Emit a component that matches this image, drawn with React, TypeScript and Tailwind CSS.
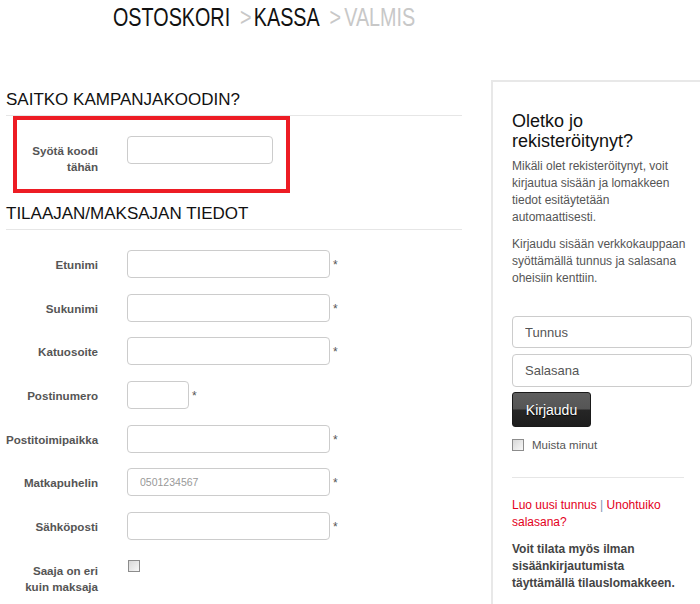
const fields = [
  { label: "Etunimi", w: "w-[203px]" },
  { label: "Sukunimi", w: "w-[203px]" },
  { label: "Katuosoite", w: "w-[203px]" },
  { label: "Postinumero", w: "w-[62px]" },
  { label: "Postitoimipaikka", w: "w-[203px]" },
  { label: "Matkapuhelin", w: "w-[203px]", placeholder: "0501234567" },
  { label: "Sähköposti", w: "w-[203px]" },
];

function Heading({ children }: { children: React.ReactNode }) {
  return (
    <h2 className="text-[17px] leading-[20px] text-[#111] pb-[5px] border-b border-[#e6e6e6]">
      {children}
    </h2>
  );
}

function Field({ label, w, placeholder }: { label: string; w: string; placeholder?: string }) {
  return (
    <div className="flex items-start">
      <label className="w-[92px] shrink-0 pt-[7px] text-right text-[11.6px] leading-[16px] font-bold text-[#555]">
        {label}
      </label>
      <input
        type="text"
        placeholder={placeholder}
        className={`${w} ml-[29px] h-[28px] rounded-[4px] border border-[#ccc] bg-white px-[12px] text-[10.5px] text-[#333] placeholder:text-[#999] outline-none`}
      />
      <span className="ml-[3px] mt-[9px] text-[12px] leading-none text-[#555]">*</span>
    </div>
  );
}

function FakeCheckbox() {
  return (
    <span className="block w-[12px] h-[12px] border border-[#8c8c8c] bg-gradient-to-br from-[#d8d8d8] to-[#f8f8f8]" />
  );
}

export default function App() {
  return (
    <div className="w-[700px] h-[604px] overflow-hidden bg-white" style={{ fontFamily: '"Liberation Sans", Arial, sans-serif' }}>
      {/* Steps */}
      <div className="h-[80px] pt-[4px] pl-[113px]">
        <div className="flex items-start origin-left scale-x-[0.76] text-[26px] leading-none">
          <span className="text-[#111]">OSTOSKORI</span>
          <span className="ml-[13px] text-[#c8c8c8]">&gt;</span>
          <span className="ml-[3px] text-[#111]">KASSA</span>
          <span className="ml-[13px] text-[#c8c8c8]">&gt;</span>
          <span className="ml-[4px] text-[#c8c8c8]">VALMIS</span>
        </div>
      </div>

      <div className="flex items-start">
        {/* Left: form */}
        <div className="ml-[6px] w-[456px] shrink-0 pt-[10px]">
          <Heading>SAITKO KAMPANJAKOODIN?</Heading>
          <div className="ml-[7px] w-[277px] h-[77px] border-4 border-[#ed1c24] pt-[16px]">
            <div className="flex items-start">
              <label className="w-[81px] shrink-0 pt-[7px] text-right text-[11.6px] leading-[16px] font-bold text-[#555]">
                Syötä koodi tähän
              </label>
              <input
                type="text"
                className="ml-[29px] w-[146px] h-[28px] rounded-[4px] border border-[#ccc] bg-white outline-none"
              />
            </div>
          </div>

          <div className="mt-[11px]">
            <Heading>TILAAJAN/MAKSAJAN TIEDOT</Heading>
          </div>

          <div className="pt-[20px] flex flex-col gap-[15.7px]">
            {fields.map((f) => (
              <Field key={f.label} label={f.label} w={f.w} placeholder={f.placeholder} />
            ))}
            <div className="flex items-start">
              <label className="w-[92px] shrink-0 pt-[7px] text-right text-[11.6px] leading-[16px] font-bold text-[#555]">
                Saaja on eri kuin maksaja
              </label>
              <span className="ml-[30px] mt-[4px]">
                <FakeCheckbox />
              </span>
            </div>
          </div>
        </div>

        {/* Right: login panel */}
        <div className="ml-[29px] w-[240px] h-[524px] shrink-0 border-l-2 border-t-2 border-[#e8e8e8] pl-[19px] pt-[29px]">
          <h3 className="w-[180px] text-[18px] leading-[20px] text-[#111]">Oletko jo rekisteröitynyt?</h3>
          <p className="w-[180px] mt-[7px] text-[12px] leading-[17px] text-[#555]">
            Mikäli olet rekisteröitynyt, voit kirjautua sisään ja lomakkeen tiedot esitäytetään automaattisesti.
          </p>
          <p className="w-[180px] mt-[10px] text-[12px] leading-[17px] text-[#555]">
            Kirjaudu sisään verkkokauppaan syöttämällä tunnus ja salasana oheisiin kenttiin.
          </p>

          <input
            type="text"
            placeholder="Tunnus"
            className="block mt-[29px] w-[180px] h-[32px] rounded-[4px] border border-[#ccc] bg-white px-[12px] text-[13px] placeholder:text-[#555] outline-none"
          />
          <input
            type="password"
            placeholder="Salasana"
            className="block mt-[6px] w-[180px] h-[33px] rounded-[4px] border border-[#ccc] bg-white px-[12px] text-[13px] placeholder:text-[#555] outline-none"
          />
          <button
            className="mt-[5px] w-[79px] h-[35px] rounded-[3px] border border-[#1a1a1a] pt-[2px] text-[14px] text-white"
            style={{
              background: "linear-gradient(to bottom, #5e5e5e 0%, #555 48%, #262626 52%, #1e1e1e 100%)",
              textShadow: "0 1px 1px rgba(0,0,0,0.8)",
            }}
          >
            Kirjaudu
          </button>

          <div className="mt-[11px] flex items-center">
            <FakeCheckbox />
            <span className="ml-[8px] text-[11.5px] leading-[14px] text-[#555]">Muista minut</span>
          </div>

          <div className="mt-[25px] w-[172px] border-t border-[#e6e6e6]" />

          <div className="w-[180px] pt-[19px] text-[12px] leading-[17px] text-[#e3001b]">
            <span>Luo uusi tunnus</span> <span className="text-[#7f96b2]">|</span> <span>Unohtuiko</span>{" "}
            <span>salasana?</span>
          </div>
          <p className="w-[172px] mt-[10px] text-[12px] leading-[17px] font-bold text-[#444]">
            Voit tilata myös ilman sisäänkirjautumista täyttämällä tilauslomakkeen.
          </p>
        </div>
      </div>
    </div>
  );
}
